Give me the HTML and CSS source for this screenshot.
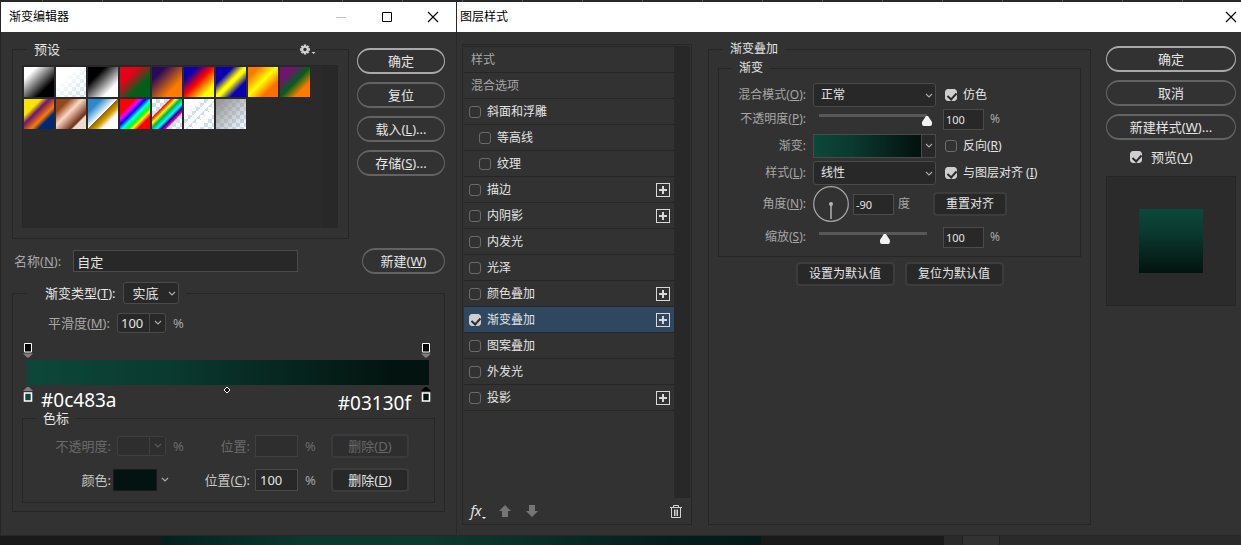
FILE: index.html
```html
<!DOCTYPE html>
<html lang="zh-CN">
<head>
<meta charset="utf-8">
<title>图层样式</title>
<link rel="stylesheet" href="styles.css">
</head>
<body>
<div class="ruler"></div>
<main class="workspace">
  <section class="dialog editor">
    <header class="titlebar">
      <h1 class="title">渐变编辑器</h1>
      <button class="win-btn" aria-label="最小化" disabled><svg width="12" height="12" viewBox="0 0 12 12"><path d="M1 6.500h10" stroke="#c4c4c4"/></svg></button>
      <button class="win-btn" aria-label="最大化"><svg width="12" height="12" viewBox="0 0 12 12"><path d="M1.500 1.500h9v9h-9z" fill="none" stroke="#000"/></svg></button>
      <button class="win-btn" aria-label="关闭"><svg width="12" height="12" viewBox="0 0 12 12"><path d="M1 1l10 10M11 1L1 11" stroke="#000" stroke-width="1.100"/></svg></button>
    </header>
    <div class="editor-body">
      <div class="top-row">
        <fieldset class="group presets">
          <legend>预设</legend>
          <button class="gear" aria-label="预设菜单"><svg width="16" height="12" viewBox="0 0 16 12"><g stroke="#d2d2d2" stroke-width="2.400"><path d="M5 .5v10M0 5.500h10M1.500 2l7 7M8.500 2l-7 7"/></g><circle cx="5" cy="5.500" r="3.600" fill="#d2d2d2"/><circle cx="5" cy="5.500" r="1.700" fill="#323232"/><path d="M11.500 8h4l-2 2z" fill="#d2d2d2"/></svg></button>
          <div class="preset-list">
            <div class="swatches">
              <span class="swatch g1"></span><span class="swatch g2"></span><span class="swatch g3"></span><span class="swatch g4"></span><span class="swatch g5"></span><span class="swatch g6"></span><span class="swatch g7"></span><span class="swatch g8"></span><span class="swatch g9"></span><span class="swatch g10"></span><span class="swatch g11"></span><span class="swatch g12"></span><span class="swatch g13"></span><span class="swatch g14"></span><span class="swatch g15"></span><span class="swatch g16"></span>
            </div>
            <div class="scrollbar"></div>
          </div>
        </fieldset>
        <div class="actions">
          <button class="pill primary">确定</button>
          <button class="pill">复位</button>
          <button class="pill">载入(<u>L</u>)...</button>
          <button class="pill">存储(<u>S</u>)...</button>
        </div>
      </div>
      <div class="name-row">
        <label class="muted" for="name">名称(<u>N</u>):</label>
        <input class="field name-field" id="name" value="自定">
        <button class="pill new-btn">新建(<u>W</u>)</button>
      </div>
      <fieldset class="group gradient-type">
        <legend>
          <label for="type">渐变类型(<u>T</u>):</label>
          <span class="select small-select"><select id="type"><option>实底</option></select><svg class="chev" width="8" height="6" viewBox="0 0 8 6"><path d="M1 1l3 3 3-3"/></svg></span>
        </legend>
        <div class="smooth-row">
          <label class="muted label" for="smooth">平滑度(<u>M</u>):</label>
          <span class="combo"><input id="smooth" value="100"><button aria-label="平滑度选项"><svg class="chev" width="8" height="6" viewBox="0 0 8 6"><path d="M1 1l3 3 3-3"/></svg></button></span>
          <span class="muted percent">%</span>
        </div>
        <div class="ramp">
          <div class="stops">
            <svg width="10" height="16" viewBox="0 0 10 16"><path d="M1.500 .5h7v8.500h-7z" fill="#000" stroke="#fff"/><path d="M0 10.500h10l-4 4H4z" fill="#7e7e7e"/></svg>
            <svg width="10" height="16" viewBox="0 0 10 16"><path d="M1.500 .5h7v8.500h-7z" fill="#000" stroke="#fff"/><path d="M0 10.500h10l-4 4H4z" fill="#7e7e7e"/></svg>
          </div>
          <div class="bar"></div>
          <div class="stops lower">
            <svg width="10" height="17" viewBox="0 0 10 17"><path d="M0 5h10L6 1H4z" fill="#7e7e7e"/><path d="M1.500 7h7v8h-7z" fill="#0c483a" stroke="#fff" stroke-width="1.600"/></svg>
            <span class="hex">#0c483a</span>
            <svg class="midpoint" width="8" height="8" viewBox="0 0 8 8"><path d="M4 1l3 3-3 3-3-3z" fill="#111" stroke="#fff"/></svg>
            <span class="hex hex-end">#03130f</span>
            <svg width="10" height="17" viewBox="0 0 10 17"><path d="M0 5h10L6 1H4z" fill="#000"/><path d="M1.500 7h7v8h-7z" fill="#03130f" stroke="#fff" stroke-width="1.600"/></svg>
          </div>
        </div>
        <fieldset class="group color-stops">
          <legend>色标</legend>
          <div class="stop-grid">
            <label class="label off" for="opa">不透明度:</label>
            <span class="cell indent off"><span class="combo"><input id="opa" disabled><button disabled aria-label="不透明度选项"><svg class="chev" width="8" height="6" viewBox="0 0 8 6"><path d="M1 1l3 3 3-3"/></svg></button></span><span class="pct-dim">%</span></span>
            <label class="label off" for="pos1">位置:</label>
            <span class="cell pad"><input class="field pos off-field" id="pos1" disabled><span class="pct-dim">%</span></span>
            <button class="btn" disabled>删除(<u>D</u>)</button>
            <label class="label bright" for="color">颜色:</label>
            <span class="cell color-cell"><button class="color-well" id="color" aria-label="颜色"></button><svg class="chev" width="8" height="6" viewBox="0 0 8 6"><path d="M1 1l3 3 3-3"/></svg></span>
            <label class="label bright" for="pos2">位置(<u>C</u>):</label>
            <span class="cell pad"><input class="field pos" id="pos2" value="100"><span class="muted">%</span></span>
            <button class="btn">删除(<u>D</u>)</button>
          </div>
        </fieldset>
      </fieldset>
    </div>
  </section>

  <section class="dialog style-dialog">
    <header class="titlebar">
      <h1 class="title">图层样式</h1>
      <button class="win-btn close-end" aria-label="关闭"><svg width="12" height="12" viewBox="0 0 12 12"><path d="M1 1l10 10M11 1L1 11" stroke="#000" stroke-width="1.100"/></svg></button>
    </header>
    <div class="style-body">
      <div class="effects">
        <div class="effects-main">
          <ul class="effect-list">
            <li class="head">样式</li>
            <li class="head">混合选项</li>
            <li><label><input type="checkbox">斜面和浮雕</label></li>
            <li class="sub"><label><input type="checkbox">等高线</label></li>
            <li class="sub"><label><input type="checkbox">纹理</label></li>
            <li><label><input type="checkbox">描边</label><button class="plus" aria-label="添加描边"></button></li>
            <li><label><input type="checkbox">内阴影</label><button class="plus" aria-label="添加内阴影"></button></li>
            <li><label><input type="checkbox">内发光</label></li>
            <li><label><input type="checkbox">光泽</label></li>
            <li><label><input type="checkbox">颜色叠加</label><button class="plus" aria-label="添加颜色叠加"></button></li>
            <li class="selected"><label><input type="checkbox" checked>渐变叠加</label><button class="plus" aria-label="添加渐变叠加"></button></li>
            <li><label><input type="checkbox">图案叠加</label></li>
            <li><label><input type="checkbox">外发光</label></li>
            <li><label><input type="checkbox">投影</label><button class="plus" aria-label="添加投影"></button></li>
          </ul>
          <div class="scrollbar"></div>
        </div>
        <div class="effects-tools">
          <button class="tool fx" aria-label="效果"><i>fx</i><svg width="4" height="3" viewBox="0 0 4 3"><path d="M0 0h4L2 2z" fill="#fff"/></svg></button>
          <button class="tool" aria-label="上移"><svg width="12" height="12" viewBox="0 0 12 12"><path d="M6 0l6 6H9v6H3V6H0z" fill="#757575"/></svg></button>
          <button class="tool" aria-label="下移"><svg width="12" height="12" viewBox="0 0 12 12"><path d="M6 12l6-6H9V0H3v6H0z" fill="#757575"/></svg></button>
          <button class="tool trash" aria-label="删除"><svg width="12" height="13" viewBox="0 0 12 13"><path d="M0 2.500h12M3.500 2V.5h5V2M1.500 3v9.500h9V3M4.500 4.500v6.500M6 4.500v6.500M7.500 4.500v6.500" fill="none" stroke="#d4d4d4"/></svg></button>
        </div>
      </div>

      <fieldset class="group overlay">
        <legend>渐变叠加</legend>
        <fieldset class="group overlay-inner">
          <legend>渐变</legend>
          <div class="form">
            <label class="label muted" for="blend">混合模式(<u>O</u>):</label>
            <span class="select"><select id="blend"><option>正常</option></select><svg class="chev" width="8" height="6" viewBox="0 0 8 6"><path d="M1 1l3 3 3-3"/></svg></span>
            <label class="check"><input type="checkbox" checked><span>仿色</span></label>

            <label class="label muted" for="opacity">不透明度(<u>P</u>):</label>
            <input class="slider" type="range" value="100" aria-label="不透明度">
            <span class="cell"><input class="field num" id="opacity" value="100"><span class="muted">%</span></span>

            <label class="label muted" for="grad">渐变:</label>
            <span class="grad-pick"><button class="grad-fill" id="grad" aria-label="渐变"></button><button class="grad-drop" aria-label="渐变选项"><svg class="chev" width="8" height="6" viewBox="0 0 8 6"><path d="M1 1l3 3 3-3"/></svg></button></span>
            <label class="check"><input type="checkbox"><span>反向(<u>R</u>)</span></label>

            <label class="label muted" for="style">样式(<u>L</u>):</label>
            <span class="select"><select id="style"><option>线性</option></select><svg class="chev" width="8" height="6" viewBox="0 0 8 6"><path d="M1 1l3 3 3-3"/></svg></span>
            <label class="check"><input type="checkbox" checked><span>与图层对齐 (<u>I</u>)</span></label>

            <label class="label muted" for="angle">角度(<u>N</u>):</label>
            <span class="angle-row">
              <svg width="36" height="36" viewBox="0 0 36 36"><circle cx="18" cy="18" r="17.300" fill="none" stroke="#a6a6a6" stroke-width="1.200"/><path d="M18 18v15" stroke="#909090" stroke-width="2"/><circle cx="18" cy="18" r="2" fill="#b4b4b4"/></svg>
              <input class="field num" id="angle" value="-90"><span class="muted">度</span>
              <button class="btn reset">重置对齐</button>
            </span>

            <label class="label muted" for="scale">缩放(<u>S</u>):</label>
            <input class="slider" type="range" value="61" aria-label="缩放">
            <span class="cell"><input class="field num" id="scale" value="100"><span class="muted">%</span></span>
          </div>
        </fieldset>
        <div class="defaults">
          <button class="btn">设置为默认值</button>
          <button class="btn">复位为默认值</button>
        </div>
      </fieldset>

      <div class="side">
        <button class="pill primary">确定</button>
        <button class="pill">取消</button>
        <button class="pill">新建样式(<u>W</u>)...</button>
        <label class="check preview-check"><input type="checkbox" checked><span>预览(<u>V</u>)</span></label>
        <div class="preview"><div class="preview-fill"></div></div>
      </div>
    </div>
  </section>
</main>
<div class="canvas-strip"><span class="texture"></span><span class="dock"><span class="dock-tab"></span></span></div>
</body>
</html>
```
FILE: styles.css
```css
* { box-sizing: border-box; }

body {
  margin: 0;
  min-height: 100vh;
  display: flex;
  flex-direction: column;
  background: #1a1a1a;
  color: #e4e4e4;
  font: 12px/18px "Noto Sans", "Noto Sans CJK SC", sans-serif;
}

button, input, select { font: inherit; color: inherit; margin: 0; padding: 0; border: 0; background: none; border-radius: 0; outline: 0; }
button { display: flex; align-items: center; justify-content: center; white-space: nowrap; }
u { text-underline-offset: 1px; }
svg { display: block; flex: none; }
label { white-space: nowrap; }

.ruler { height: 2px; background: repeating-linear-gradient(90deg, #292626 0 42px, #5a5a5a 42px 43px, #292626 43px 60px); }
.workspace { flex: 1; display: grid; grid-template-columns: 457px minmax(0, 1fr); }
.dialog { display: flex; flex-direction: column; background: #323232; border-bottom: 1px solid #272727; }
.editor { border-left: 1px solid #262626; border-right: 1px solid #292929; font-size: 13px; }

.titlebar { height: 30px; display: flex; align-items: stretch; background: #fff; color: #000; }
.editor .titlebar { padding-left: 8px; }
.style-dialog .titlebar { padding-left: 3px; }
.title { flex: 1; margin: 0; font-size: 12px; font-weight: 400; line-height: 30px; }
.win-btn { width: 46px; }
.close-end { width: 24px; justify-content: flex-start; padding-left: 8px; }

.muted { color: #a6a6a6; }
.label { text-align: right; }
.chev { fill: none; stroke: #a8a8a8; stroke-width: 1.200; }

.group { margin: 0; padding: 0; border: 1px solid #262626; min-width: 0; }
.group > legend { padding: 0 7px; margin-left: 5px; }

.pill { height: 26px; border: solid #636363; border-width: 2px 1px; border-radius: 13px; font-size: 13px; }
.pill.primary { border-color: #a9a9a9; }

.btn { height: 24px; border: 2px solid #3c3c3c; border-radius: 4px; background: #282828; }
.btn:disabled { color: #686868; border-color: #3a3a3a; background: #2e2e2e; }

.field { height: 22px; border: 1px solid #4b4b4b; background: #282828; min-width: 0; }
.num { width: 41px; padding-left: 2px; font-size: 11px; }
.cell { display: flex; align-items: center; gap: 7px; }

.select { position: relative; display: block; }
.select select { appearance: none; width: 100%; height: 24px; padding-left: 7px; border: 1px solid #4a4a4a; border-radius: 3px; background: #282828; }
.select .chev { position: absolute; right: 3px; top: 10px; pointer-events: none; }

.combo { display: flex; width: 49px; height: 20px; border: 1px solid #4a4a4a; border-radius: 3px; background: #282828; }
.combo input { flex: 1; min-width: 0; padding-left: 3px; }
.combo button { width: 16px; border-left: 1px solid #4a4a4a; }

input[type="checkbox"] { appearance: none; flex: none; position: relative; width: 12px; height: 12px; border: 1px solid #6a6a6a; border-radius: 3px; }
input[type="checkbox"]:checked { background: #cfcfcf; border-color: #cfcfcf; }
input[type="checkbox"]:checked::after { content: ""; position: absolute; left: 3px; top: 1px; width: 4px; height: 7px; border: solid #2b2b2b; border-width: 0 2px 2px 0; transform: rotate(42deg); }

/* Gradient editor */
.editor-body { padding: 8px 11px 22px 11px; }
.top-row { display: flex; gap: 8px; }
.presets { position: relative; flex: 1; padding: 7px 10px 10px 9px; }
.gear { position: absolute; top: -14px; right: 32px; height: 12px; padding-left: 3px; background: #323232; }
.preset-list { display: flex; height: 163px; border-top: 1px solid #262626; border-left: 1px solid #262626; background: #2a2a2a; }
.swatches { flex: 1; display: flex; flex-wrap: wrap; align-content: flex-start; gap: 2px; padding: 1px; }
.swatch { width: 30px; height: 30px; }
.scrollbar { width: 16px; background: #282828; }
.actions { width: 88px; display: flex; flex-direction: column; gap: 8px; padding-top: 8px; }

.g1 { background: linear-gradient(135deg, #fff 20%, #000 72%); }
.g2 { background: linear-gradient(135deg, #fff 30%, transparent), repeating-conic-gradient(#cbdff6 0 25%, #fff 0 50%) 0 0 / 8px 8px; }
.g3 { background: linear-gradient(135deg, #000 28%, #fff 76%); }
.g4 { background: linear-gradient(135deg, #e60019 30%, #00601b 66%); }
.g5 { background: linear-gradient(135deg, #290a59 22%, #ff7c00 72%); }
.g6 { background: linear-gradient(135deg, #0a00b2 22%, #f00 48%, #ff0 80%); }
.g7 { background: linear-gradient(135deg, #0a00b2 28%, #ff0 48% 54%, #0a00b2 74%); }
.g8 { background: linear-gradient(135deg, #ff7800 18%, #ff0 48%, #ff6e02 74%); }
.g9 { background: linear-gradient(135deg, #6f156c 25%, #00601b 50%, #fd7c00 75%); }
.g10 { background: linear-gradient(135deg, #f9e600 28%, #6f156c 42%, #fd7c00 62%, #002874 74%); }
.g11 { background: linear-gradient(135deg, #97461a 22%, #fbd8c5 44%, #6c2e16 74%, #efdbcd 78%); }
.g12 { background: linear-gradient(135deg, #2989cc 22%, #fff 49%, #906a00 50%, #d99f00 62%, #fff 74%); }
.g13 { background: linear-gradient(135deg, #f00 25%, #f0f 34%, #00f 43%, #0ff 53%, #0f0 63%, #ff0 70%, #f00 79%); }
.g14 { background: linear-gradient(135deg, transparent 29%, #f00 32%, #ff0 40%, #00b050 48%, #0ff 58%, #00a 65%, #f0a 72%, transparent 75%), repeating-conic-gradient(#cbdff6 0 25%, #fff 0 50%) 0 0 / 8px 8px; }
.g15 { background: linear-gradient(135deg, #fff 31%, transparent 31% 42%, #fff 42% 53%, transparent 53% 62%, #fff 62% 72%, transparent 72%), repeating-conic-gradient(#cbdff6 0 25%, #fff 0 50%) 0 0 / 8px 8px; }
.g16 { background: linear-gradient(135deg, #999 10%, transparent), repeating-conic-gradient(#cbdff6 0 25%, #fff 0 50%) 0 0 / 8px 8px; }

.name-row { display: flex; align-items: center; margin-top: 9px; padding-left: 2px; }
.name-field { width: 225px; margin-left: 12px; padding-left: 3px; }
.new-btn { width: 83px; margin-left: auto; }

.gradient-type { margin-top: 8px; padding: 9px 9px 8px; }
.gradient-type > legend { display: flex; align-items: center; gap: 7px; padding-left: 18px; }
.small-select { width: 56px; }
.small-select select { height: 22px; padding-left: 9px; }
.small-select .chev { top: 9px; }
.smooth-row { display: flex; align-items: center; }
.smooth-row .label { width: 88px; margin-right: 7px; }
.percent { margin-left: 7px; }
.ramp { margin-top: 10px; }
.stops { display: flex; justify-content: space-between; padding: 0 4px 0 1px; }
.bar { height: 25px; margin: 1px 6px 1px 5px; background: linear-gradient(90deg, #0c483a, #0a3a30 35%, #03130f 92%); }
.lower { display: grid; grid-template-columns: 10px 1fr 8px 1fr 10px; height: 28px; }
.hex { align-self: center; padding-left: 8px; font-size: 19px; line-height: 22px; color: #fff; }
.hex-end { align-self: end; text-align: right; padding: 0 10px 0 0; }
.color-stops { margin-top: -3px; padding: 9px 0 10px; }
.color-stops > legend { margin-left: 13px; line-height: 14px; }
.stop-grid { display: grid; grid-template-columns: 88px 72px 63px 77px 78px; gap: 10px 2px; align-items: center; }
.off, .pct-dim { color: #6a6a6a; }
.off .combo, .off .combo button, .off-field { border-color: #3f3f3f; background: #2e2e2e; }
.off .chev { stroke: #5c5c5c; }
.bright { color: #c6c6c6; }
.indent { padding-left: 4px; }
.pad { padding-left: 3px; }
.pos { width: 43px; padding-left: 4px; }
.color-cell { gap: 4px; }
.color-well { width: 44px; height: 22px; border: 1px solid #1c1c1c; background: #03130f; }

/* Layer style */
.style-body { flex: 1; display: flex; padding: 8px 5px 10px 5px; }
.effects { width: 230px; display: flex; flex-direction: column; margin-top: 4px; border: 1px solid #262626; }
.effects-main { flex: 1; display: flex; padding: 1px 1px 0; }
.effect-list { flex: 1; margin: 0; padding: 0; list-style: none; border-top: 1px solid #262626; }
.effect-list li { height: 26px; display: flex; align-items: center; justify-content: space-between; padding: 0 4px 0 5px; border-bottom: 1px solid #262626; }
.effect-list .head { padding-left: 7px; color: #a6a6a6; }
.effect-list .sub { padding-left: 15px; }
.effect-list .selected { background: #2f485f; }
.effect-list label { display: flex; align-items: center; gap: 6px; }
.plus { width: 14px; height: 14px; border: 1px solid #d8d8d8; background: linear-gradient(#d8d8d8, #d8d8d8) center / 8px 2px no-repeat, linear-gradient(#d8d8d8, #d8d8d8) center / 2px 8px no-repeat; }
.effects-tools { display: flex; align-items: center; gap: 15px; height: 26px; padding: 0 9px; }
.fx { width: 12px; align-items: flex-end; font-size: 14px; }
.trash { margin-left: auto; }

.overlay { flex: 1; display: flex; flex-direction: column; margin-left: 16px; padding: 1px 9px 0; }
.overlay-inner { padding: 6px 0 5px; }
.overlay-inner > legend { margin-left: 13px; }
.form { display: grid; grid-template-columns: 87px 123px 1fr; grid-template-rows: 24px 24px 30px 24px 38px 28px; column-gap: 7px; align-items: center; }
.form .cell, .form .check { gap: 6px; }
.check { display: flex; align-items: center; gap: 6px; }
.form .check input { margin-left: 2px; }
.form .num { height: 21px; }
.slider { appearance: none; width: 118px; height: 14px; margin-left: 1px; background: linear-gradient(#585858, #585858) center top 2px / calc(100% - 10px) 3px no-repeat; }
.slider::-webkit-slider-thumb { appearance: none; width: 10px; height: 10px; margin-top: 4px; border-radius: 2px; background: #f2f2f2; clip-path: polygon(40% 0, 60% 0, 100% 60%, 100% 100%, 0 100%, 0 60%); }
.grad-pick { display: flex; height: 24px; border: 1px solid #4a4a4a; }
.grad-fill { flex: 1; background: linear-gradient(90deg, #0c483a, #0a3a30 35%, #03130f 95%); }
.grad-drop { width: 14px; border-left: 1px solid #4a4a4a; background: #282828; }
.angle-row { grid-column: 2 / 4; display: flex; align-items: center; gap: 4px; }
.reset { width: 74px; margin-left: 19px; }
.defaults { display: flex; justify-content: center; gap: 10px; margin-top: 5px; }
.defaults .btn { width: 99px; }

.side { width: 130px; display: flex; flex-direction: column; gap: 8px; margin-left: 15px; padding-top: 6px; }
.preview-check { padding-left: 24px; font-size: 13px; gap: 9px; }
.preview { aspect-ratio: 1; display: grid; place-items: center; margin-top: 2px; border: 1px solid #262626; background: #2b2b2b; }
.preview-fill { width: 50%; aspect-ratio: 1; background: linear-gradient(#0c483a, #0a3a30 35%, #03130f); }

.canvas-strip { height: 9px; display: flex; justify-content: space-between; padding-left: 161px; }
.texture { width: 600px; background: linear-gradient(90deg, #04201f, #0b3930 25%, #0c3a2c 45%, #0a3029 60%, #051d1d 85%, #031a18); }
.dock { width: 297px; display: flex; padding-left: 18px; background: #2a2a2a; }
.dock-tab { width: 38px; border: solid #1f1f1f; border-width: 0 1px; background: #323232; }
```
